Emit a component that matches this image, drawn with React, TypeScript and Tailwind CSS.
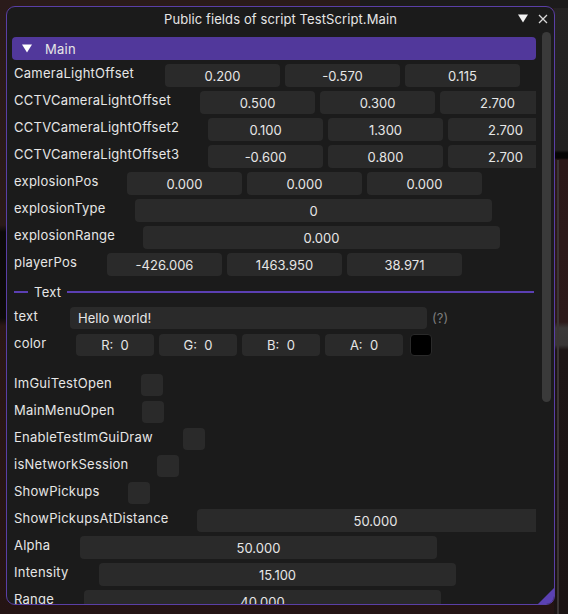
import React from "react";

type Row =
  | { kind: "vec3"; label: string; lw: string; values: string[] }
  | { kind: "single"; label: string; lw: string; value: string }
  | { kind: "check"; label: string; lw: string }
  | { kind: "text"; label: string; lw: string; value: string }
  | { kind: "color"; label: string; lw: string };

const top: Row[] = [
  { kind: "vec3", label: "CameraLightOffset", lw: "w-[151px]", values: ["0.200", "-0.570", "0.115"] },
  { kind: "vec3", label: "CCTVCameraLightOffset", lw: "w-[186px]", values: ["0.500", "0.300", "2.700"] },
  { kind: "vec3", label: "CCTVCameraLightOffset2", lw: "w-[194px]", values: ["0.100", "1.300", "2.700"] },
  { kind: "vec3", label: "CCTVCameraLightOffset3", lw: "w-[194px]", values: ["-0.600", "0.800", "2.700"] },
  { kind: "vec3", label: "explosionPos", lw: "w-[113px]", values: ["0.000", "0.000", "0.000"] },
  { kind: "single", label: "explosionType", lw: "w-[121px]", value: "0" },
  { kind: "single", label: "explosionRange", lw: "w-[129px]", value: "0.000" },
  { kind: "vec3", label: "playerPos", lw: "w-[93px]", values: ["-426.006", "1463.950", "38.971"] },
];

const mid: Row[] = [
  { kind: "text", label: "text", lw: "w-[56px]", value: "Hello world!" },
  { kind: "color", label: "color", lw: "w-[62px]" },
];

const bottom: Row[] = [
  { kind: "check", label: "ImGuiTestOpen", lw: "w-[127px]" },
  { kind: "check", label: "MainMenuOpen", lw: "w-[128px]" },
  { kind: "check", label: "EnableTestImGuiDraw", lw: "w-[169px]" },
  { kind: "check", label: "isNetworkSession", lw: "w-[143px]" },
  { kind: "check", label: "ShowPickups", lw: "w-[114px]" },
  { kind: "single", label: "ShowPickupsAtDistance", lw: "w-[183px]", value: "50.000" },
  { kind: "single", label: "Alpha", lw: "w-[66px]", value: "50.000" },
  { kind: "single", label: "Intensity", lw: "w-[85px]", value: "15.100" },
  { kind: "single", label: "Range", lw: "w-[70px]", value: "40.000" },
];

const frame = "h-[23px] shrink-0 rounded-[4px] bg-[#2a2a2a] flex items-center justify-center whitespace-nowrap";

function Field({ row }: { row: Row }) {
  let body: React.ReactNode = null;
  if (row.kind === "vec3") {
    body = (
      <div className="flex gap-[5px] shrink-0">
        {row.values.map((v, i) => (
          <div key={i} className={`${frame} w-[115px]`}>{v}</div>
        ))}
      </div>
    );
  } else if (row.kind === "single") {
    body = <div className={`${frame} w-[357px]`}>{row.value}</div>;
  } else if (row.kind === "check") {
    body = <div className="h-[22px] w-[22px] shrink-0 rounded-[4px] bg-[#2a2a2a]" />;
  } else if (row.kind === "text") {
    body = (
      <div className="flex items-center gap-[5px] shrink-0">
        <div className="h-[22px] w-[357px] shrink-0 rounded-[4px] bg-[#2a2a2a] flex items-center pl-[8px]">{row.value}</div>
        <span className="text-[#7c7c7c]">(?)</span>
      </div>
    );
  } else {
    body = (
      <div className="flex items-center shrink-0">
        <div className="flex gap-[5px]">
          {["R: 0", "G: 0", "B: 0", "A: 0"].map((v) => (
            <div key={v} className="h-[22px] w-[78px] shrink-0 rounded-[4px] bg-[#2a2a2a] flex items-center justify-center whitespace-pre">{v.replace(": ", ":  ")}</div>
          ))}
        </div>
        <div className="ml-[7px] h-[22px] w-[22px] rounded-[4px] bg-black border border-[#2a2a2a]" />
      </div>
    );
  }
  return (
    <div className="h-[23px] flex items-start pl-[2px] shrink-0">
      <div className={`${row.lw} shrink-0 whitespace-nowrap leading-[16px] pt-[1px] tracking-[0.25px]`}>{row.label}</div>
      {body}
    </div>
  );
}

export default function App() {
  return (
    <div className="relative w-[568px] h-[614px] overflow-hidden bg-[#1d1616] [font-family:Inter,'Noto_Sans',sans-serif] text-[13px] leading-[16px] text-[#e6e6e6]">
      {/* backdrop */}
      <div className="absolute left-0 top-0 w-[568px] h-[614px] bg-[linear-gradient(180deg,#2a1b1a_0px,#2a1a19_225px,#0c0a0a_232px,#0c0a0a_318px,#2b1817_326px,#241414_614px)]" />
      <div className="absolute right-0 top-0 w-[14px] h-[614px] bg-[linear-gradient(180deg,#252323_0px,#222020_150px,#060505_153px,#060505_158px,#2b1818_160px,#2d1a1a_322px,#3b3838_328px,#383535_345px,#1d1515_350px,#1b1313_614px)]" />
      <div className="absolute right-[9px] top-[160px] w-[2px] h-[454px] bg-[#3b3535]" />
      <div className="absolute left-[360px] top-0 w-[208px] h-[8px] bg-[#1c1b1b]" />

      <div className="relative ml-[6px] mt-[6px] w-[549px] h-[599px] rounded-[9px] border border-[#5a3fa6] bg-[#1b1b1b] flex flex-col overflow-hidden">
        {/* title bar */}
        <div className="relative h-[24px] shrink-0 flex items-center justify-center pb-[1px]">
          <span className="tracking-[0.1px]">Public fields of script TestScript.Main</span>
          <svg className="absolute left-[511px] top-[7px]" width="10" height="9" viewBox="0 0 10 9">
            <polygon points="0,0.5 10,0.5 5,8.5" fill="#f2f2f2" />
          </svg>
          <svg className="absolute left-[531px] top-[7px]" width="10" height="10" viewBox="0 0 10 10">
            <path d="M1 1 L9 9 M9 1 L1 9" stroke="#d8d8d8" strokeWidth="1.3" />
          </svg>
        </div>

        {/* body */}
        <div className="flex flex-1 min-h-0">
          <div className="w-[529px] shrink-0 pl-[5px] pt-[6px] flex flex-col gap-[4px] overflow-hidden">
            <div className="h-[23px] w-[524px] shrink-0 rounded-[4px] bg-[#51389b] flex items-center">
              <svg className="ml-[10px]" width="10" height="9" viewBox="0 0 10 9">
                <polygon points="0,0.5 10,0.5 5,8.5" fill="#ffffff" />
              </svg>
              <span className="ml-[13px] tracking-[0.25px]">Main</span>
            </div>
            {top.map((r) => (
              <Field key={r.label} row={r} />
            ))}
            <div className="h-[23px] w-[524px] shrink-0 flex items-center">
              <div className="ml-[2px] w-[14px] h-[2px] bg-[#5b3fb3]" />
              <span className="mx-[6px] leading-[16px] tracking-[0.25px]">Text</span>
              <div className="w-[467px] h-[2px] bg-[#5b3fb3]" />
            </div>
            {mid.map((r) => (
              <Field key={r.label} row={r} />
            ))}
            <div className="h-[9px] shrink-0" />
            {bottom.map((r) => (
              <Field key={r.label} row={r} />
            ))}
          </div>
          {/* scrollbar */}
          <div className="w-[9px] ml-[6px] pt-[1px] shrink-0">
            <div className="w-[9px] h-[370px] rounded-[5px] bg-[#3a3a3a]" />
          </div>
        </div>

        {/* resize grip */}
        <svg className="absolute right-0 bottom-0" width="16" height="16" viewBox="0 0 16 16">
          <polygon points="16,0 16,16 0,16" fill="#5b41b3" />
        </svg>
      </div>
    </div>
  );
}
